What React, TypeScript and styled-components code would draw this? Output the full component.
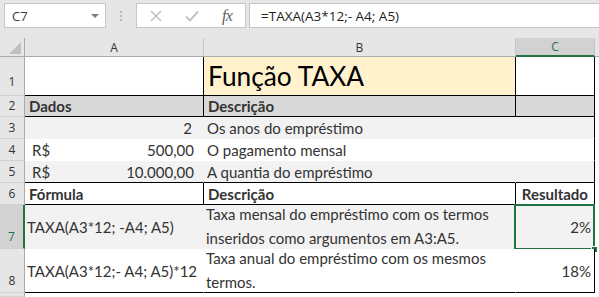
import React from 'react';
import styled, { createGlobalStyle } from 'styled-components';

const Global = createGlobalStyle`
  html, body { margin: 0; padding: 0; background: #fff; overflow: hidden; }
  #root { width: 599px; height: 297px; }
`;

const GREEN = '#217346';

const Window = styled.div`
  width: 599px;
  height: 297px;
  overflow: hidden;
  background: #e6e6e6;
  display: flex;
  flex-direction: column;
  font-family: "Lato", "Liberation Sans", sans-serif;
`;

const FormulaBar = styled.div`
  height: 38px;
  flex: none;
  display: flex;
  align-items: flex-start;
  padding: 3px 0 0 4px;
  box-sizing: border-box;
`;

const Box = styled.div`
  height: 25px;
  box-sizing: border-box;
  background: #fff;
  border: 1px solid #c6c6c6;
  display: flex;
  align-items: center;
`;

const NameBox = styled(Box)`
  width: 102px;
  padding: 0 6px 0 7px;
  justify-content: space-between;
  font-family: "Open Sans", sans-serif;
  font-size: 13px;
  color: #3c3c3c;
`;

const Caret = styled.span`
  width: 0;
  height: 0;
  border-left: 4px solid transparent;
  border-right: 4px solid transparent;
  border-top: 4px solid #7f7f7f;
`;

const Grip = styled.div`
  width: 30px;
  height: 25px;
  display: flex;
  flex-direction: column;
  align-items: center;
  justify-content: center;
  gap: 2px;
`;

const GripDot = styled.span`
  width: 2px;
  height: 2px;
  background: #b4b4b4;
`;

const ButtonBox = styled(Box)`
  width: 110px;
  padding-left: 1px;
`;

const IconSlot = styled.div`
  width: 36px;
  height: 23px;
  display: flex;
  align-items: center;
  justify-content: center;
`;

const Fx = styled.span`
  font-family: "Liberation Serif", serif;
  font-style: italic;
  font-size: 16px;
  color: #606060;
  letter-spacing: -0.5px;
`;

const FormulaInput = styled(Box)`
  flex: 1;
  margin-left: 3px;
  border-right: none;
  padding-left: 11px;
  font-family: "Open Sans", sans-serif;
  font-size: 13.5px;
  color: #1e1e1e;
`;

const Sheet = styled.div`
  flex: 1;
  display: grid;
  grid-template-columns: 25px 179px 312px 79px 1fr;
  grid-template-rows: 19px 39px 21px 22px 22px 22px 22px 44px 44px 1fr;
  background: #fff;
`;

const Corner = styled.div`
  box-sizing: border-box;
  background: #e6e6e6;
  border-right: 1px solid #ababab;
  border-bottom: 1px solid #ababab;
  position: relative;
`;

const CornerTri = styled.svg`
  position: absolute;
  left: 9px;
  top: 4px;
`;

const ColHead = styled.div<{ $sel?: boolean }>`
  box-sizing: border-box;
  background: ${p => (p.$sel ? '#d2d2d2' : '#e6e6e6')};
  border-right: 1px solid #c6c6c6;
  border-bottom: ${p => (p.$sel ? `2px solid ${GREEN}` : '1px solid #ababab')};
  display: flex;
  align-items: center;
  justify-content: center;
  font-family: "Open Sans", sans-serif;
  font-size: 12px;
  color: ${p => (p.$sel ? GREEN : '#333')};
`;

const RowHead = styled.div<{ $sel?: boolean; $pb?: number }>`
  box-sizing: border-box;
  background: ${p => (p.$sel ? '#d2d2d2' : '#e6e6e6')};
  border-right: ${p => (p.$sel ? `2px solid ${GREEN}` : '1px solid #ababab')};
  border-bottom: 1px solid #d0d0d0;
  display: flex;
  align-items: flex-end;
  justify-content: center;
  padding-bottom: ${p => p.$pb ?? 2}px;
  line-height: 16px;
  font-family: "Open Sans", sans-serif;
  font-size: 12px;
  color: ${p => (p.$sel ? GREEN : '#333')};
`;

type CellProps = {
  $fill?: string;
  $r?: boolean;
  $b?: boolean;
  $align?: 'left' | 'right' | 'between';
  $bold?: boolean;
  $pl?: number;
  $pr?: number;
};

const Cell = styled.div<CellProps>`
  box-sizing: border-box;
  position: relative;
  background: ${p => p.$fill || '#fff'};
  border-right: 1px solid ${p => (p.$r ? '#000' : 'transparent')};
  border-bottom: 1px solid ${p => (p.$b ? '#000' : 'transparent')};
  display: flex;
  align-items: center;
  justify-content: ${p =>
    p.$align === 'right' ? 'flex-end' : p.$align === 'between' ? 'space-between' : 'flex-start'};
  padding-left: ${p => p.$pl ?? 3}px;
  padding-right: ${p => p.$pr ?? 4}px;
  font-size: 15px;
  font-weight: ${p => (p.$bold ? 700 : 400)};
  color: #333;
  white-space: nowrap;
`;

const TitleCell = styled(Cell)`
  align-items: flex-end;
  padding-bottom: 3px;
  font-size: 26.3px;
  color: #000;
`;

const WrapText = styled.div`
  line-height: 23.5px;
  white-space: nowrap;
`;

const Selection = styled.div`
  position: absolute;
  left: -2px;
  top: -1px;
  right: -1px;
  bottom: -2px;
  border: 2px solid ${GREEN};
  pointer-events: none;
`;

const Handle = styled.div`
  position: absolute;
  right: -5px;
  bottom: -5px;
  width: 5px;
  height: 5px;
  background: ${GREEN};
  border: 1px solid #fff;
`;

const Blank = styled.div`
  background: #fff;
`;

const HeadBlank = styled.div`
  background: #e6e6e6;
  border-bottom: 1px solid #ababab;
  box-sizing: border-box;
`;

const G1 = '#f2f2f2';
const G2 = '#d9d9d9';
const Y = '#fff2cc';

export default function App() {
  return (
    <Window>
      <Global />
      <FormulaBar>
        <NameBox>
          <span>C7</span>
          <Caret />
        </NameBox>
        <Grip>
          <GripDot />
          <GripDot />
          <GripDot />
        </Grip>
        <ButtonBox>
          <IconSlot>
            <svg width="12" height="12" viewBox="0 0 12 12">
              <path d="M1 1 L11 11 M11 1 L1 11" stroke="#bcbcbc" strokeWidth="1.4" fill="none" />
            </svg>
          </IconSlot>
          <IconSlot>
            <svg width="14" height="12" viewBox="0 0 14 12">
              <path d="M1 6.5 L5 10.5 L13 1.5" stroke="#c2c2c2" strokeWidth="2" fill="none" />
            </svg>
          </IconSlot>
          <IconSlot>
            <Fx>fx</Fx>
          </IconSlot>
        </ButtonBox>
        <FormulaInput>=TAXA(A3*12;- A4; A5)</FormulaInput>
      </FormulaBar>
      <Sheet>
        <Corner>
          <CornerTri width="13" height="13" viewBox="0 0 13 13">
            <path d="M0 12 L12 0 L12 12 Z" fill="#bfbfbf" />
          </CornerTri>
        </Corner>
        <ColHead>A</ColHead>
        <ColHead>B</ColHead>
        <ColHead $sel>C</ColHead>
        <HeadBlank />

        <RowHead $pb={5}>1</RowHead>
        <Cell $r $b />
        <TitleCell $fill={Y} $r $b $pl={4}>Função TAXA</TitleCell>
        <Cell $r $b />
        <Blank />

        <RowHead>2</RowHead>
        <Cell $fill={G2} $r $b $bold $pl={4}>Dados</Cell>
        <Cell $fill={G2} $r $b $bold $pl={4}>Descrição</Cell>
        <Cell $fill={G2} $r $b />
        <Blank />

        <RowHead>3</RowHead>
        <Cell $fill={G1} $align="right" $pr={11}>2</Cell>
        <Cell $fill={G1} $pl={3}>Os anos do empréstimo</Cell>
        <Cell $fill={G1} $r />
        <Blank />

        <RowHead>4</RowHead>
        <Cell $align="between" $pl={7} $pr={9}>
          <span>R$</span>
          <span>500,00</span>
        </Cell>
        <Cell $pl={3}>O pagamento mensal</Cell>
        <Cell $r />
        <Blank />

        <RowHead>5</RowHead>
        <Cell $fill={G1} $b $align="between" $pl={7} $pr={9}>
          <span>R$</span>
          <span>10.000,00</span>
        </Cell>
        <Cell $fill={G1} $b $pl={3}>A quantia do empréstimo</Cell>
        <Cell $fill={G1} $r $b />
        <Blank />

        <RowHead>6</RowHead>
        <Cell $r $b $bold $pl={4}>Fórmula</Cell>
        <Cell $r $b $bold $pl={4}>Descrição</Cell>
        <Cell $r $b $bold $align="right" $pr={6}>Resultado</Cell>
        <Blank />

        <RowHead $sel $pb={3}>7</RowHead>
        <Cell $fill={G1} $pl={2}>TAXA(A3*12; -A4; A5)</Cell>
        <Cell $fill={G1} $pl={2}>
          <WrapText>
            Taxa mensal do empréstimo com os termos
            <br />
            inseridos como argumentos em A3:A5.
          </WrapText>
        </Cell>
        <Cell $fill={G1} $r $align="right" $pr={3}>
          2%
          <Selection>
            <Handle />
          </Selection>
        </Cell>
        <Blank />

        <RowHead $pb={3}>8</RowHead>
        <Cell $b $pl={2}>TAXA(A3*12;- A4; A5)*12</Cell>
        <Cell $b $pl={2}>
          <WrapText>
            Taxa anual do empréstimo com os mesmos
            <br />
            termos.
          </WrapText>
        </Cell>
        <Cell $r $b $align="right" $pr={3}>18%</Cell>
        <Blank />

        <RowHead />
        <Cell />
        <Cell />
        <Cell />
        <Blank />
      </Sheet>
    </Window>
  );
}
